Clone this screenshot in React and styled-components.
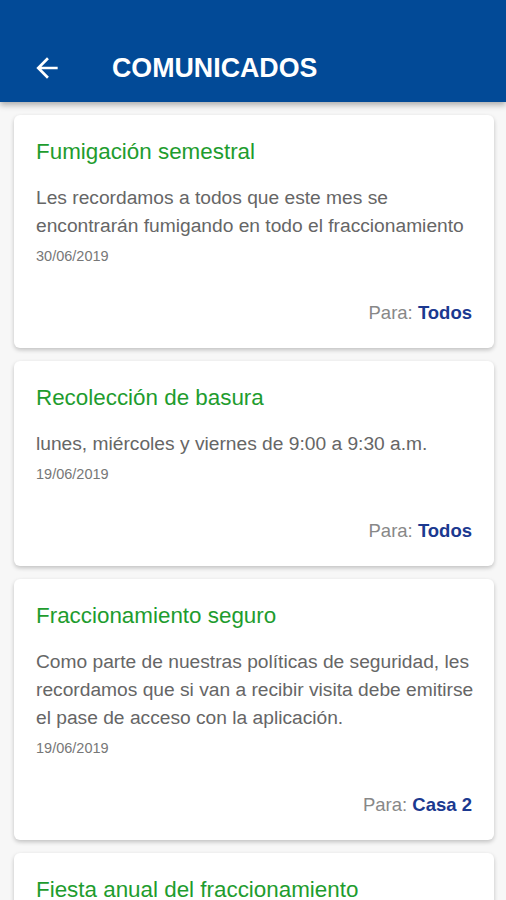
import React from 'react';
import styled, { createGlobalStyle } from 'styled-components';

const GlobalStyle = createGlobalStyle`
  body {
    margin: 0;
    background: #f7f7f7;
    font-family: "Liberation Sans", Arial, sans-serif;
  }
`;

const Header = styled.header`
  background: #024a97;
  height: 102px;
  padding-top: 34px;
  box-sizing: border-box;
  display: flex;
  align-items: center;
  box-shadow: 0 3px 6px rgba(0, 0, 0, 0.3);
  position: relative;
  z-index: 1;
`;

const BackButton = styled.button`
  border: none;
  background: none;
  padding: 0;
  margin-left: 31px;
  width: 32px;
  height: 32px;
  display: flex;
  color: #fff;
  cursor: pointer;
`;

const Title = styled.h1`
  margin: 0 0 0 49px;
  color: #fff;
  font-size: 26.8px;
  font-weight: bold;
  line-height: 32px;
`;

const List = styled.main`
  display: flex;
  flex-direction: column;
  gap: 13px;
  padding: 13px 12px 13px 14px;
`;

const Card = styled.article`
  background: #fff;
  border-radius: 6px;
  box-shadow: 0 2px 4px rgba(0, 0, 0, 0.22);
  padding: 25px 22px 23px;
`;

const CardTitle = styled.h2`
  margin: 0;
  color: #1e9c2e;
  font-size: 22.4px;
  font-weight: normal;
  line-height: 24px;
`;

const Body = styled.p`
  margin: 20px -10px 0 0;
  color: #666;
  font-size: 19.2px;
  line-height: 28px;
`;

const DateText = styled.div`
  margin-top: 7px;
  color: #777;
  font-size: 14.5px;
  line-height: 18px;
`;

const Footer = styled.div`
  margin-top: 36px;
  text-align: right;
  font-size: 18.5px;
  line-height: 24px;
  color: #888;
`;

const Target = styled.span`
  color: #1b3990;
  font-weight: bold;
`;

const notices = [
  {
    title: 'Fumigación semestral',
    body: 'Les recordamos a todos que este mes se encontrarán fumigando en todo el fraccionamiento',
    date: '30/06/2019',
    to: 'Todos',
  },
  {
    title: 'Recolección de basura',
    body: 'lunes, miércoles y viernes de 9:00 a 9:30 a.m.',
    date: '19/06/2019',
    to: 'Todos',
  },
  {
    title: 'Fraccionamiento seguro',
    body: 'Como parte de nuestras políticas de seguridad, les recordamos que si van a recibir visita debe emitirse el pase de acceso con la aplicación.',
    date: '19/06/2019',
    to: 'Casa 2',
  },
  {
    title: 'Fiesta anual del fraccionamiento',
    body: 'Los invitamos a todos a la fiesta anual en el área común del fraccionamiento.',
    date: '15/06/2019',
    to: 'Todos',
  },
];

const ArrowBack = () => (
  <svg width="32" height="32" viewBox="0 0 24 24" fill="currentColor">
    <path d="M20 11H7.83l5.59-5.59L12 4l-8 8 8 8 1.41-1.41L7.83 13H20v-2z" />
  </svg>
);

export default function App() {
  return (
    <>
      <GlobalStyle />
      <Header>
        <BackButton aria-label="Regresar">
          <ArrowBack />
        </BackButton>
        <Title>COMUNICADOS</Title>
      </Header>
      <List>
        {notices.map((n) => (
          <Card key={n.title}>
            <CardTitle>{n.title}</CardTitle>
            <Body>{n.body}</Body>
            <DateText>{n.date}</DateText>
            <Footer>
              Para: <Target>{n.to}</Target>
            </Footer>
          </Card>
        ))}
      </List>
    </>
  );
}
